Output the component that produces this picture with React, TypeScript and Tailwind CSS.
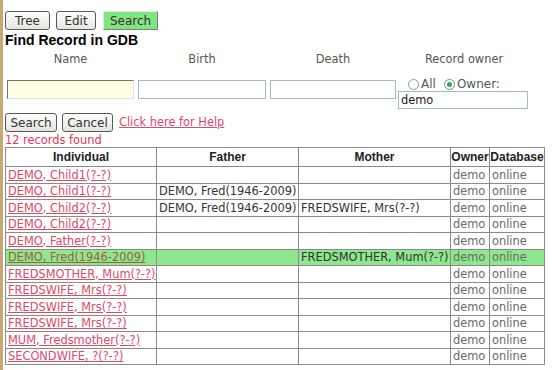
import React from "react";

const rows = [
  { ind: "DEMO, Child1(?-?)", father: "", mother: "" },
  { ind: "DEMO, Child1(?-?)", father: "DEMO, Fred(1946-2009)", mother: "" },
  { ind: "DEMO, Child2(?-?)", father: "DEMO, Fred(1946-2009)", mother: "FREDSWIFE, Mrs(?-?)" },
  { ind: "DEMO, Child2(?-?)", father: "", mother: "" },
  { ind: "DEMO, Father(?-?)", father: "", mother: "" },
  { ind: "DEMO, Fred(1946-2009)", father: "", mother: "FREDSMOTHER, Mum(?-?)", hi: true },
  { ind: "FREDSMOTHER, Mum(?-?)", father: "", mother: "" },
  { ind: "FREDSWIFE, Mrs(?-?)", father: "", mother: "" },
  { ind: "FREDSWIFE, Mrs(?-?)", father: "", mother: "" },
  { ind: "FREDSWIFE, Mrs(?-?)", father: "", mother: "" },
  { ind: "MUM, Fredsmother(?-?)", father: "", mother: "" },
  { ind: "SECONDWIFE, ?(?-?)", father: "", mother: "" },
];

// old-school grey push button
function OldButton({ label, w }: { label: string; w: string }) {
  return (
    <button
      className={`${w} h-[19px] rounded-[3px] border border-[#5a5a5a] bg-gradient-to-b from-white to-[#e6e4dc] text-[12px] leading-none text-[#333] flex items-center justify-center`}
    >
      {label}
    </button>
  );
}

export default function App() {
  const font = { fontFamily: '"DejaVu Sans", Verdana, sans-serif' };
  const cell = "border border-[#8a8a8a] px-[2px] whitespace-nowrap overflow-visible";

  return (
    <div className="flex min-h-[370px] w-[554px] bg-white" style={font}>
      <div className="w-[3px] shrink-0 bg-[#c8a872]" />
      <div className="pl-[2px] pt-[11px] text-[11.4px]">
        {/* top tabs */}
        <div className="flex gap-[6px]">
          <OldButton label="Tree" w="w-[45px]" />
          <OldButton label="Edit" w="w-[40px]" />
          <button className="ml-[1px] flex h-[19px] w-[55px] items-center justify-center border border-t-[#d8f4d8] border-l-[#d8f4d8] border-r-[#808080] border-b-[#808080] bg-[#80e480] text-[12px] leading-none text-[#333]">
            Search
          </button>
        </div>

        <h1
          className="mt-[2px] text-[14px] font-bold leading-[17px] text-black"
          style={{ fontFamily: '"Liberation Sans", Arial, sans-serif' }}
        >
          Find Record in GDB
        </h1>

        {/* search form */}
        <div className="mt-[2px] grid grid-cols-[131px_132px_130px_132px] text-[#555]">
          <div className="h-[16px] text-center leading-[16px]">Name</div>
          <div className="h-[16px] text-center leading-[16px]">Birth</div>
          <div className="h-[16px] text-center leading-[16px]">Death</div>
          <div className="h-[16px] text-center leading-[16px]">Record owner</div>

          <div className="pl-[2px] pt-[13px]">
            <div className="h-[19px] w-[127px] border border-t-[#707070] border-l-[#707070] border-r-[#e0e0e0] border-b-[#e0e0e0] bg-[#fffde2]" />
          </div>
          <div className="pl-[2px] pt-[13px]">
            <div className="h-[19px] w-[128px] border border-[#a4b8cc] bg-white" />
          </div>
          <div className="pl-[2px] pt-[13px]">
            <div className="h-[19px] w-[126px] border border-[#a4b8cc] bg-white" />
          </div>
          <div className="pt-[11px]">
            <div className="flex h-[12px] items-center pl-[10px] text-[12px] text-[#555]">
              <span className="mr-[2px] inline-block h-[11px] w-[11px] rounded-full border border-[#8a9aaa] bg-white" />
              All
              <span className="ml-[8px] mr-[2px] flex h-[11px] w-[11px] items-center justify-center rounded-full border border-[#6a9a7a] bg-white">
                <span className="h-[5px] w-[5px] rounded-full bg-[#3aa05a]" />
              </span>
              Owner:
            </div>
            <div className="mt-[1px] h-[18px] w-[130px] border border-[#a4b8cc] bg-white pl-[2px] leading-[16px] text-[#222]">
              demo
            </div>
          </div>
        </div>

        {/* actions */}
        <div className="mt-[4px] flex items-center gap-[5px]">
          <OldButton label="Search" w="w-[52px]" />
          <OldButton label="Cancel" w="w-[51px]" />
          <a className="ml-[1px] text-[#e04a66] underline" href="#">
            Click here for Help
          </a>
        </div>
        <div className="mt-[1px] leading-[14px] text-[#e8345a]">12 records found</div>

        {/* results */}
        <table className="table-fixed border-collapse" style={{ width: 539 }}>
          <colgroup>
            <col style={{ width: 151 }} />
            <col style={{ width: 142 }} />
            <col style={{ width: 152 }} />
            <col style={{ width: 39 }} />
            <col style={{ width: 55 }} />
          </colgroup>
          <thead>
            <tr
              className="h-[17px] text-[12px] font-bold text-[#222]"
              style={{ fontFamily: '"Liberation Sans", Arial, sans-serif' }}
            >
              <th className="border border-[#8a8a8a] p-0 text-center">Individual</th>
              <th className="border border-[#8a8a8a] p-0 text-center">Father</th>
              <th className="border border-[#8a8a8a] p-0 text-center">Mother</th>
              <th className="border border-[#8a8a8a] p-0 text-center">Owner</th>
              <th className="border border-[#8a8a8a] p-0 text-center">Database</th>
            </tr>
          </thead>
          <tbody>
            {rows.map((r, i) => (
              <tr key={i} className={`h-[16.5px] leading-[14px] ${r.hi ? "bg-[#8ee68e]" : ""}`}>
                <td className={`${cell} py-0`}>
                  <a href="#" className={`underline ${r.hi ? "text-[#a0603a]" : "text-[#e04a66]"}`}>
                    {r.ind}
                  </a>
                </td>
                <td className={`${cell} py-0 text-[#333]`}>{r.father}</td>
                <td className={`${cell} py-0 text-[#333]`}>{r.mother}</td>
                <td className={`${cell} py-0 text-[#6a6a6a]`}>demo</td>
                <td className={`${cell} py-0 text-[#6a6a6a]`}>online</td>
              </tr>
            ))}
          </tbody>
        </table>
      </div>
    </div>
  );
}
